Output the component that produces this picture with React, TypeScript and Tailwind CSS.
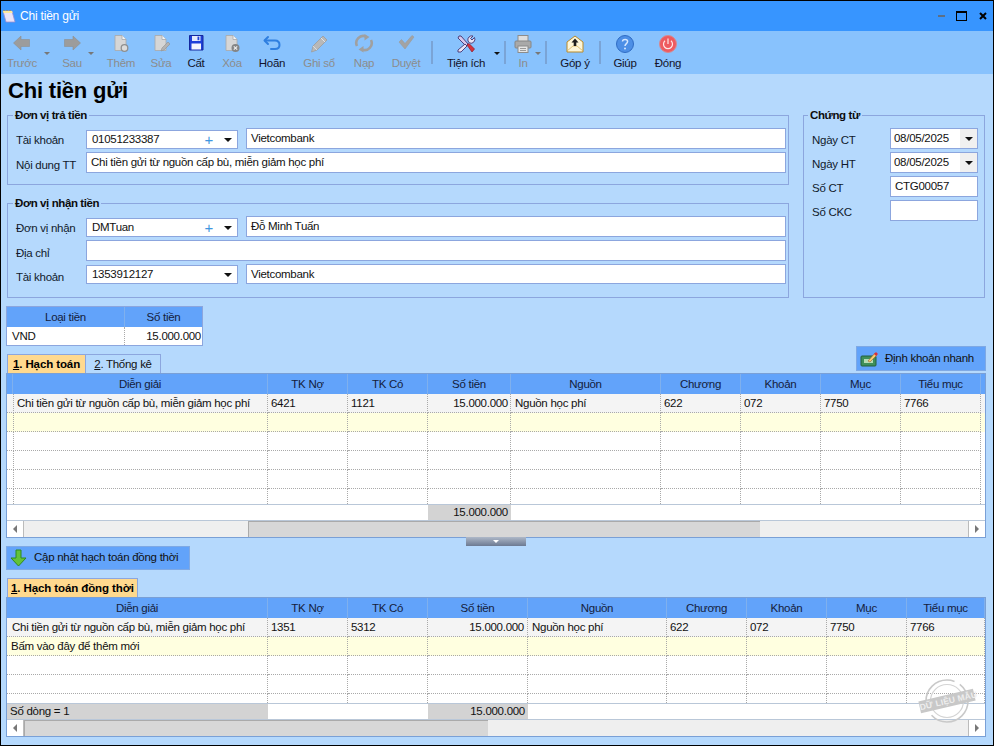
import React from "react";

const Gray = "#9c9c9c";

function ArrowIcon({ right = false }: { right?: boolean }) {
  return (
    <svg width="20" height="20" viewBox="0 0 20 20">
      <path d="M1.5 9 L9 2 V5.5 H17.5 V12.5 H9 V16 Z" fill={Gray} stroke="#8f8f8f" strokeWidth="0.6" transform={right ? "translate(20 0) scale(-1 1)" : undefined} />
    </svg>
  );
}
function DocIcon({ badge }: { badge: "plus" | "pen" | "x" }) {
  return (
    <svg width="20" height="20" viewBox="0 0 20 20">
      <path d="M4 1.5 H11 L15 5.5 V16.5 H4 Z" fill="#d6d6d6" stroke="#a8a8a8" strokeWidth="0.8" />
      <path d="M11 1.5 V5.5 H15" fill="#f5f5f5" stroke="#a8a8a8" strokeWidth="0.8" />
      {badge === "plus" && <circle cx="13.5" cy="14" r="3.3" fill="#dcdcdc" stroke="#8f8f8f" strokeWidth="1.3" />}
      {badge === "pen" && <path d="M10 17 L11 14 L17 8 L19 10 L13 16 Z" fill="#b3b3b3" stroke="#909090" strokeWidth="0.6" />}
      {badge === "x" && (
        <g>
          <circle cx="13.5" cy="14" r="4" fill="#858585" />
          <path d="M11.8 12.3 L15.2 15.7 M15.2 12.3 L11.8 15.7" stroke="#eee" strokeWidth="1.2" />
        </g>
      )}
    </svg>
  );
}
function SaveIcon() {
  return (
    <svg width="20" height="20" viewBox="0 0 20 20">
      <path d="M3.5 1.5 H17 V16 H3.5 Z" fill="#1e40d8" stroke="#14279e" strokeWidth="1" />
      <rect x="6" y="2" width="8.5" height="5" fill="#e4eafc" />
      <rect x="5.5" y="9.5" width="9.5" height="6" fill="#f4f6fd" />
      <rect x="11.5" y="2.6" width="1.8" height="3.6" fill="#1e40d8" />
    </svg>
  );
}
function UndoIcon() {
  return (
    <svg width="20" height="20" viewBox="0 0 20 20" fill="none" stroke="#2f7fe0" strokeWidth="2" strokeLinecap="round" strokeLinejoin="round">
      <path d="M6 3 L2.5 6.5 L6 10" />
      <path d="M3 6.5 H13 C16 6.5 17.5 8.5 17.5 11 C17.5 13.5 16 15 13 15 H9" />
    </svg>
  );
}
function PencilIcon() {
  return (
    <svg width="20" height="20" viewBox="0 0 20 20">
      <path d="M2.5 18 L4 12 L14 2 L18 6 L8 16 Z" fill="#b8b8b8" stroke="#9c9c9c" strokeWidth="0.8" />
      <path d="M12 4 L16 8" stroke="#e5e5e5" strokeWidth="1" />
      <path d="M4 12 L8 16" stroke="#e5e5e5" strokeWidth="0.8" />
    </svg>
  );
}
function RefreshIcon() {
  return (
    <svg width="20" height="20" viewBox="0 0 20 20" fill="none" stroke="#a0a0a0" strokeWidth="2.6">
      <path d="M3 12 A7 7 0 0 1 12 2.5" />
      <path d="M17 6 A7 7 0 0 1 8 15.5" />
      <path d="M10.5 0 L15.5 3 L10.5 6.5 Z" fill="#a0a0a0" stroke="none" />
      <path d="M9.5 12 L4.5 15.5 L9.5 18.5 Z" fill="#a0a0a0" stroke="none" />
    </svg>
  );
}
function CheckIcon() {
  return (
    <svg width="20" height="20" viewBox="0 0 20 20" fill="none">
      <path d="M3 8 L5.5 5.5 L9 9.5 L16 1.5 L18 3 L9 15 Z" fill="#a3a3a3" stroke="#9a9a9a" strokeWidth="0.6" strokeLinejoin="round" />
    </svg>
  );
}
function ToolsIcon() {
  return (
    <svg width="20" height="20" viewBox="0 0 20 20">
      <path d="M3 2 L5 2 L12 10 L10 12 L2 4 Z" fill="#d8c8ec" stroke="#42306e" strokeWidth="0.9" />
      <path d="M9 10 L11 12 L5 18 L2 18 L2 16 Z" fill="#e9e4f4" stroke="#42306e" strokeWidth="0.9" />
      <path d="M12 7 A4 4 0 0 1 17 2 L14.5 4.5 L16 6 L18.5 3.5 A4 4 0 0 1 13.5 9 Z" fill="#e9e4f4" stroke="#42306e" strokeWidth="0.9" />
      <path d="M11 11 L13 9.5 L18.5 15 L16 18 Z" fill="#d8303c" stroke="#8b1c28" strokeWidth="0.7" />
    </svg>
  );
}
function PrinterIcon() {
  return (
    <svg width="20" height="20" viewBox="0 0 20 20">
      <rect x="5" y="1.5" width="10" height="6" fill="#dedede" stroke="#8c8c8c" />
      <rect x="2" y="7" width="16" height="7" rx="1" fill="#a9a9a9" stroke="#868686" />
      <rect x="5" y="12" width="10" height="6.5" fill="#e6e6e6" stroke="#8c8c8c" />
      <path d="M7 14.5 H13 M7 16.5 H13" stroke="#9a9a9a" />
    </svg>
  );
}
function MailIcon() {
  return (
    <svg width="20" height="20" viewBox="0 0 20 20">
      <path d="M2 8 L10 2 L18 8 V18 H2 Z" fill="#fdf6d8" stroke="#b98a2a" strokeWidth="1" />
      <path d="M2 17 L8 12 H12 L18 17" fill="none" stroke="#d8b560" strokeWidth="0.8" />
      <path d="M10 4.5 L13.5 8.5 H11.3 V12 H8.7 V8.5 H6.5 Z" fill="#1d1d1d" />
    </svg>
  );
}
function HelpIcon() {
  return (
    <svg width="20" height="20" viewBox="0 0 20 20">
      <circle cx="10" cy="10" r="8.5" fill="#4d8fe6" stroke="#2f6cc4" />
      <path d="M7.5 7.5 C7.5 4.8 12.6 4.8 12.6 7.6 C12.6 9.6 10 9.6 10 12" fill="none" stroke="#d6e8ff" strokeWidth="1.5" />
      <circle cx="10" cy="14.6" r="1" fill="#d6e8ff" />
    </svg>
  );
}
function PowerIcon() {
  return (
    <svg width="20" height="20" viewBox="0 0 20 20">
      <circle cx="10" cy="10" r="8.5" fill="#ee5a5f" stroke="#d8898f" />
      <path d="M7 6.8 A4.5 4.5 0 1 0 13 6.8" fill="none" stroke="#ffe6e6" strokeWidth="1.2" />
      <path d="M10 4.5 V10" stroke="#ffe6e6" strokeWidth="1.2" />
    </svg>
  );
}

function ToolItem({ label, icon, className, disabled = false }: { label: string; icon: React.ReactNode; className: string; disabled?: boolean }) {
  return (
    <div className={`flex flex-col items-center shrink-0 ${className}`}>
      <div className="h-[20px] w-[20px]">{icon}</div>
      <div className={`h-[16px] mt-[1px] leading-[16px] whitespace-nowrap ${disabled ? "text-[#8c8c8c]" : "text-[#14142a]"}`}>{label}</div>
    </div>
  );
}
function ToolCaret({ className, dark = false }: { className: string; dark?: boolean }) {
  return (
    <div className={`h-[20px] flex items-end justify-center shrink-0 ${className}`}>
      <div className={`w-0 h-0 border-l-[3px] border-r-[3px] border-t-[3px] border-l-transparent border-r-transparent -mb-[1px] ${dark ? "border-t-[#111]" : "border-t-[#777]"}`} />
    </div>
  );
}
function ToolSep({ className }: { className: string }) {
  return (
    <div className={`flex justify-center shrink-0 pt-[7px] ${className}`}>
      <div className="w-[2px] h-[23px] bg-[#7aa4d6]" />
    </div>
  );
}

function Box({ children, className }: { children?: React.ReactNode; className: string }) {
  return <div className={`border border-[#8ca6de] bg-white flex items-center shrink-0 ${className}`}>{children}</div>;
}
function DropArrow({ className = "" }: { className?: string }) {
  return <div className={`w-0 h-0 border-l-[4px] border-r-[4px] border-t-[4px] border-l-transparent border-r-transparent border-t-[#111] ${className}`} />;
}
function Combo({ text, plus = false }: { text: string; plus?: boolean }) {
  return (
    <Box className="w-[152px] h-[19px] pl-[5px]">
      <span className="flex-1 pt-[1px]">{text}</span>
      {plus && <span className="text-[#3f96e0] text-[15px] leading-[15px] mr-[11px]">+</span>}
      <DropArrow className="mr-[5px]" />
    </Box>
  );
}
function Label({ children, className }: { children: React.ReactNode; className: string }) {
  return <div className={`shrink-0 text-[#111a2c] whitespace-nowrap ${className}`}>{children}</div>;
}
function Group({ title, className, legend, children }: { title: string; className: string; legend: string; children: React.ReactNode }) {
  return (
    <fieldset className={`border border-[#8ca6de] ${className}`}>
      <legend className={`px-[2px] h-[14px] leading-[14px] font-bold text-[#0c0c0c] tracking-[-0.4px] ${legend}`}>{title}</legend>
      {children}
    </fieldset>
  );
}
function DateBox({ value }: { value: string }) {
  return (
    <Box className="w-[88px] h-[21px] pl-[3px] justify-between">
      <span>{value}</span>
      <div className="w-[17px] h-full bg-[#f0f0f0] flex items-center justify-center">
        <DropArrow />
      </div>
    </Box>
  );
}

function Scrollbar({ thumb }: { thumb: React.ReactNode }) {
  return (
    <div className="h-[17px] flex bg-[#efefef] border-t border-[#b9c7d8]">
      <div className="w-[17px] bg-white border-r border-[#bbb] flex items-center justify-center shrink-0">
        <div className="w-0 h-0 border-t-[4px] border-b-[4px] border-r-[4px] border-t-transparent border-b-transparent border-r-[#777]" />
      </div>
      {thumb}
      <div className="w-[17px] bg-white border-l border-[#bbb] flex items-center justify-center shrink-0 ml-auto">
        <div className="w-0 h-0 border-t-[4px] border-b-[4px] border-l-[4px] border-t-transparent border-b-transparent border-l-[#777]" />
      </div>
    </div>
  );
}

const Cell = ({ children, className = "" }: { children?: React.ReactNode; className?: string }) => (
  <div className={`border-r border-b border-dotted border-[#a9a9a9] px-[3px] overflow-hidden whitespace-nowrap leading-[18px] ${className}`}>{children}</div>
);
const Head = ({ children, className = "" }: { children?: React.ReactNode; className?: string }) => (
  <div className={`border-r border-[#7fb0ee] text-center leading-[20px] text-[#14203a] ${className}`}>{children}</div>
);

const cols1 = "grid grid-cols-[6px_255px_80px_80px_83px_150px_80px_80px_80px_80px_4px]";
const cols2 = "grid grid-cols-[261px_80px_80px_100px_139px_80px_80px_80px_78px]";

function Row1({ values, bg }: { values: string[]; bg: string }) {
  return (
    <div className={`${cols1} h-[19px] ${bg}`}>
      <Cell />
      <Cell className="pl-[4px]">{values[0]}</Cell>
      <Cell>{values[1]}</Cell>
      <Cell>{values[2]}</Cell>
      <Cell className="text-right pr-[2px]">{values[3]}</Cell>
      <Cell className="pl-[4px]">{values[4]}</Cell>
      <Cell>{values[5]}</Cell>
      <Cell>{values[6]}</Cell>
      <Cell>{values[7]}</Cell>
      <Cell>{values[8]}</Cell>
      <div />
    </div>
  );
}
function Row2({ values, bg, first = "pl-[5px]" }: { values: string[]; bg: string; first?: string }) {
  return (
    <div className={`${cols2} h-[19px] ${bg}`}>
      <Cell className={first}>{values[0]}</Cell>
      <Cell>{values[1]}</Cell>
      <Cell>{values[2]}</Cell>
      <Cell className="text-right pr-[3px]">{values[3]}</Cell>
      <Cell className="pl-[4px]">{values[4]}</Cell>
      <Cell>{values[5]}</Cell>
      <Cell>{values[6]}</Cell>
      <Cell>{values[7]}</Cell>
      <Cell>{values[8]}</Cell>
    </div>
  );
}
const empty = ["", "", "", "", "", "", "", "", ""];

export default function App() {
  return (
    <div className="w-[994px] h-[746px] overflow-hidden bg-[#b5d9fd] border border-black flex flex-col text-[11.5px] text-[#111] tracking-[-0.28px] font-['Liberation_Sans',Arial,sans-serif]">
      <div className="h-[30px] bg-[#3795ff] flex items-center shrink-0 text-white">
        <svg width="16" height="16" viewBox="0 0 16 16">
          <path d="M2 3 H11 L14 14 H5 Z" fill="#e9e3f8" stroke="#9a8fd0" strokeWidth="0.8" />
          <path d="M3 2 V5 M6 2 V5 M9 2 V5" stroke="#b09020" strokeWidth="1" />
          <path d="M2 3 H11 L11.5 5 H2.5 Z" fill="#fde9a0" />
        </svg>
        <span className="ml-[3px] text-[12px] tracking-[-0.2px]">Chi tiền gửi</span>
        <div className="ml-auto flex items-center">
          <div className="w-[7px] h-[2px] bg-[#5c6f86] mr-[11px]" />
          <div className="w-[11px] h-[10px] border border-black border-t-[2px] mr-[12px]" />
          <svg width="8" height="8" viewBox="0 0 8 8" className="mr-[6px]">
            <path d="M1 1 L7 7 M7 1 L1 7" stroke="#000" strokeWidth="2" />
          </svg>
        </div>
      </div>

      <div className="h-[43px] bg-[#88c2fd] flex items-start pt-[3px] pl-[1px] shrink-0">
        <ToolItem className="w-[40px]" label="Trước" icon={<ArrowIcon />} disabled />
        <ToolCaret className="w-[10px]" />
        <ToolItem className="w-[40px]" label="Sau" icon={<ArrowIcon right />} disabled />
        <ToolCaret className="w-[10px] -ml-[6px]" />
        <ToolItem className="w-[50px]" label="Thêm" icon={<DocIcon badge="plus" />} disabled />
        <ToolItem className="w-[30px]" label="Sửa" icon={<DocIcon badge="pen" />} disabled />
        <ToolItem className="w-[40px]" label="Cất" icon={<SaveIcon />} />
        <ToolItem className="w-[32px]" label="Xóa" icon={<DocIcon badge="x" />} disabled />
        <ToolItem className="w-[48px]" label="Hoãn" icon={<UndoIcon />} />
        <ToolItem className="w-[46px]" label="Ghi sổ" icon={<PencilIcon />} disabled />
        <ToolItem className="w-[44px]" label="Nạp" icon={<RefreshIcon />} disabled />
        <ToolItem className="w-[40px]" label="Duyệt" icon={<CheckIcon />} disabled />
        <ToolSep className="w-[12px]" />
        <ToolItem className="w-[56px]" label="Tiện ích" icon={<ToolsIcon />} />
        <ToolCaret className="w-[10px] -ml-[2px]" dark />
        <ToolSep className="w-[6px]" />
        <ToolItem className="w-[30px]" label="In" icon={<PrinterIcon />} disabled />
        <ToolCaret className="w-[10px] -ml-[5px]" />
        <ToolSep className="w-[6px]" />
        <ToolItem className="w-[46px] ml-[3px]" label="Góp ý" icon={<MailIcon />} />
        <ToolSep className="w-[4px]" />
        <ToolItem className="w-[46px]" label="Giúp" icon={<HelpIcon />} />
        <ToolItem className="w-[40px]" label="Đóng" icon={<PowerIcon />} />
      </div>

      <div className="flex-1 pl-[5px] pr-[7px] flex flex-col">
        <h1 className="h-[28px] mt-[3px] mb-[3px] ml-[2px] text-[22px] leading-[28px] font-bold text-black tracking-[-0.2px]">Chi tiền gửi</h1>

        <div className="flex items-start ml-[1px] h-[190px] shrink-0">
          <div className="w-[782px] flex flex-col gap-[11px]">
            <Group title="Đơn vị trả tiền" legend="-ml-[3px]" className="h-[77px] pl-[8px] pr-[2px] pt-[6px]">
              <div className="flex flex-col gap-[3px]">
                <div className="flex items-end h-[21px]">
                  <Label className="w-[70px] self-start pt-[4px]">Tài khoản</Label>
                  <Combo text="01051233387" plus />
                  <Box className="ml-[8px] w-[540px] h-[21px] pl-[4px] pt-[1px]">Vietcombank</Box>
                </div>
                <div className="flex h-[21px]">
                  <Label className="w-[70px] pt-[5px]">Nội dung TT</Label>
                  <Box className="w-[700px] h-[21px] pl-[4px]">Chi tiền gửi từ nguồn cấp bù, miễn giảm học phí</Box>
                </div>
              </div>
            </Group>
            <Group title="Đơn vị nhận tiền" legend="-ml-[3px]" className="h-[102px] pl-[8px] pr-[2px] pt-[6px]">
              <div className="flex flex-col gap-[3px]">
                <div className="flex items-end h-[21px]">
                  <Label className="w-[70px] self-start pt-[4px]">Đơn vị nhận</Label>
                  <Combo text="DMTuan" plus />
                  <Box className="ml-[8px] w-[540px] h-[21px] pl-[4px] pt-[1px]">Đỗ Minh Tuấn</Box>
                </div>
                <div className="flex h-[21px]">
                  <Label className="w-[70px] pt-[5px]">Địa chỉ</Label>
                  <Box className="w-[700px] h-[21px]" />
                </div>
                <div className="flex items-end h-[20px]">
                  <Label className="w-[70px] self-start pt-[5px]">Tài khoản</Label>
                  <Combo text="1353912127" />
                  <Box className="ml-[8px] w-[540px] h-[20px] pl-[4px] pt-[1px]">Vietcombank</Box>
                </div>
              </div>
            </Group>
          </div>
          <Group title="Chứng từ" legend="-ml-[4px]" className="ml-[14px] w-[182px] h-[190px] pl-[8px] pt-[6px]">
            <div className="flex flex-col gap-[3px]">
              <div className="flex h-[21px]"><Label className="w-[78px] pt-[4px]">Ngày CT</Label><DateBox value="08/05/2025" /></div>
              <div className="flex h-[21px]"><Label className="w-[78px] pt-[4px]">Ngày HT</Label><DateBox value="08/05/2025" /></div>
              <div className="flex h-[21px]"><Label className="w-[78px] pt-[4px]">Số CT</Label><Box className="w-[88px] h-[21px] pl-[4px]">CTG00057</Box></div>
              <div className="flex h-[21px]"><Label className="w-[78px] pt-[4px]">Số CKC</Label><Box className="w-[88px] h-[21px]" /></div>
            </div>
          </Group>
        </div>

        <div className="mt-[8px] w-[197px] h-[40px] border border-[#8ca6de] shrink-0">
          <div className="grid grid-cols-[118px_77px] h-[20px] bg-[#62a3fa]">
            <Head>Loại tiền</Head>
            <div className="text-center leading-[20px] text-[#14203a]">Số tiền</div>
          </div>
          <div className="grid grid-cols-[118px_77px] h-[18px] bg-white leading-[18px]">
            <div className="border-r border-dotted border-[#a9a9a9] pl-[5px]">VND</div>
            <div className="text-right pr-[1px]">15.000.000</div>
          </div>
        </div>

        <div className="flex justify-between items-start h-[27px] shrink-0">
          <div className="flex mt-[8px] ml-[1px]">
            <div className="w-[79px] h-[19px] bg-[#ffd98e] border border-b-0 border-[#8ca6de] font-bold text-black text-center leading-[19px] tracking-[-0.1px]">
              <u>1</u>. Hạch toán
            </div>
            <div className="w-[75px] h-[19px] border border-l-0 border-b-0 border-[#8ca6de] text-center leading-[19px]">
              <u>2</u>. Thống kê
            </div>
          </div>
          <div className="w-[130px] h-[25px] bg-[#62a3fa] border border-[#7fa9e4] flex items-center">
            <svg width="18" height="16" viewBox="0 0 18 16" className="ml-[3px]">
              <rect x="1" y="5" width="15" height="10" rx="1" fill="#3f8f5a" stroke="#24603c" />
              <rect x="4" y="8" width="9" height="4" fill="#b5dcb5" />
              <path d="M8 10 L15 2 L17 4 L10 11 Z" fill="#f2d071" stroke="#a2542a" strokeWidth="0.6" />
              <path d="M14 3 L16 1 L18 3 L16 5 Z" fill="#d8303c" />
            </svg>
            <span className="ml-[7px]">Định khoản nhanh</span>
          </div>
        </div>

        <div className="w-[980px] h-[165px] border border-[#7aa0d6] shrink-0 flex flex-col bg-white">
          <div className={`${cols1} h-[20px] bg-[#62a3fa] shrink-0`}>
            <Head />
            <Head>Diễn giải</Head>
            <Head>TK Nợ</Head>
            <Head>TK Có</Head>
            <Head>Số tiền</Head>
            <Head>Nguồn</Head>
            <Head>Chương</Head>
            <Head>Khoản</Head>
            <Head>Mục</Head>
            <Head>Tiểu mục</Head>
            <div />
          </div>
          <div className="h-[110px] overflow-hidden shrink-0">
            <Row1 bg="bg-[#f4f4f4]" values={["Chi tiền gửi từ nguồn cấp bù, miễn giảm học phí", "6421", "1121", "15.000.000", "Nguồn học phí", "622", "072", "7750", "7766"]} />
            <Row1 bg="bg-[#ffffe0]" values={empty} />
            <Row1 bg="bg-white" values={empty} />
            <Row1 bg="bg-white" values={empty} />
            <Row1 bg="bg-white" values={empty} />
            <Row1 bg="bg-white" values={empty} />
          </div>
          <div className={`${cols1} h-[16px] border-t border-[#b9c7d8] shrink-0 leading-[15px]`}>
            <div /><div /><div /><div />
            <div className="bg-[#d3d3d3] text-right pr-[3px]">15.000.000</div>
          </div>
          <Scrollbar thumb={<div className="ml-[224px] w-[512px] bg-[#d7d7d7] border-l border-t border-[#aaa]" />} />
        </div>

        <div className="h-[8px] shrink-0 flex justify-center">
          <div className="w-[60px] h-[9px] -mt-[1px] bg-gradient-to-b from-[#aeb8c8] to-[#6c7a92] flex justify-center pt-[3px]">
            <div className="w-0 h-0 border-l-[3px] border-r-[3px] border-t-[3px] border-l-transparent border-r-transparent border-t-white" />
          </div>
        </div>

        <div className="w-[184px] h-[24px] bg-[#62a3fa] border border-[#7fa9e4] flex items-center shrink-0">
          <svg width="18" height="18" viewBox="0 0 18 18" className="ml-[3px]">
            <path d="M6 1 H11 V9 H16 L8.5 17 L1 9 H6 Z" fill="#63c23a" stroke="#2f8a1e" strokeWidth="1" />
          </svg>
          <span className="ml-[6px]">Cập nhật hạch toán đồng thời</span>
        </div>

        <div className="mt-[8px] ml-[1px] w-[131px] h-[19px] bg-[#ffd98e] border border-b-0 border-[#8ca6de] font-bold text-black leading-[19px] pl-[3px] tracking-[-0.1px] whitespace-nowrap shrink-0">
          <u>1</u>. Hạch toán đồng thời
        </div>

        <div className="relative w-[980px] h-[140px] border border-[#7aa0d6] shrink-0 flex flex-col bg-white">
          <div className={`${cols2} h-[20px] bg-[#62a3fa] shrink-0`}>
            <Head>Diễn giải</Head>
            <Head>TK Nợ</Head>
            <Head>TK Có</Head>
            <Head>Số tiền</Head>
            <Head>Nguồn</Head>
            <Head>Chương</Head>
            <Head>Khoản</Head>
            <Head>Mục</Head>
            <Head>Tiểu mục</Head>
          </div>
          <div className="h-[85px] overflow-hidden shrink-0">
            <Row2 bg="bg-[#f4f4f4]" values={["Chi tiền gửi từ nguồn cấp bù, miễn giảm học phí", "1351", "5312", "15.000.000", "Nguồn học phí", "622", "072", "7750", "7766"]} />
            <Row2 bg="bg-[#ffffe0]" first="pl-[4px]" values={["Bấm vào đây để thêm mới", "", "", "", "", "", "", "", ""]} />
            <Row2 bg="bg-white" values={empty} />
            <Row2 bg="bg-white" values={empty} />
            <Row2 bg="bg-white" values={empty} />
          </div>
          <div className={`${cols2} h-[16px] border-t border-[#b9c7d8] shrink-0 leading-[15px]`}>
            <div className="bg-[#d3d3d3] pl-[3px]">Số dòng = 1</div>
            <div /><div />
            <div className="bg-[#d3d3d3] text-right pr-[3px]">15.000.000</div>
          </div>
          <Scrollbar thumb={<div className="w-[464px] bg-[#d7d7d7] border-l border-t border-[#aaa]" />} />

          <div className="absolute left-[911px] top-[80px] w-[58px] h-[46px] pointer-events-none flex items-center justify-center">
            <svg width="46" height="46" viewBox="0 0 46 46" className="absolute left-[6px] top-0">
              <circle cx="23" cy="23" r="21" fill="none" stroke="#c9c9c9" strokeWidth="1.6" strokeDasharray="50 6" />
              <circle cx="23" cy="23" r="16.5" fill="none" stroke="#d4d4d4" strokeWidth="1.2" />
            </svg>
            <div className="relative -rotate-[13deg] w-[56px] text-center bg-[#c8c8c8] text-[#eeeeee] font-bold text-[8.5px] leading-[12px] whitespace-nowrap tracking-[0.2px]">DỮ LIỆU MẪU</div>
          </div>
        </div>
      </div>
    </div>
  );
}
